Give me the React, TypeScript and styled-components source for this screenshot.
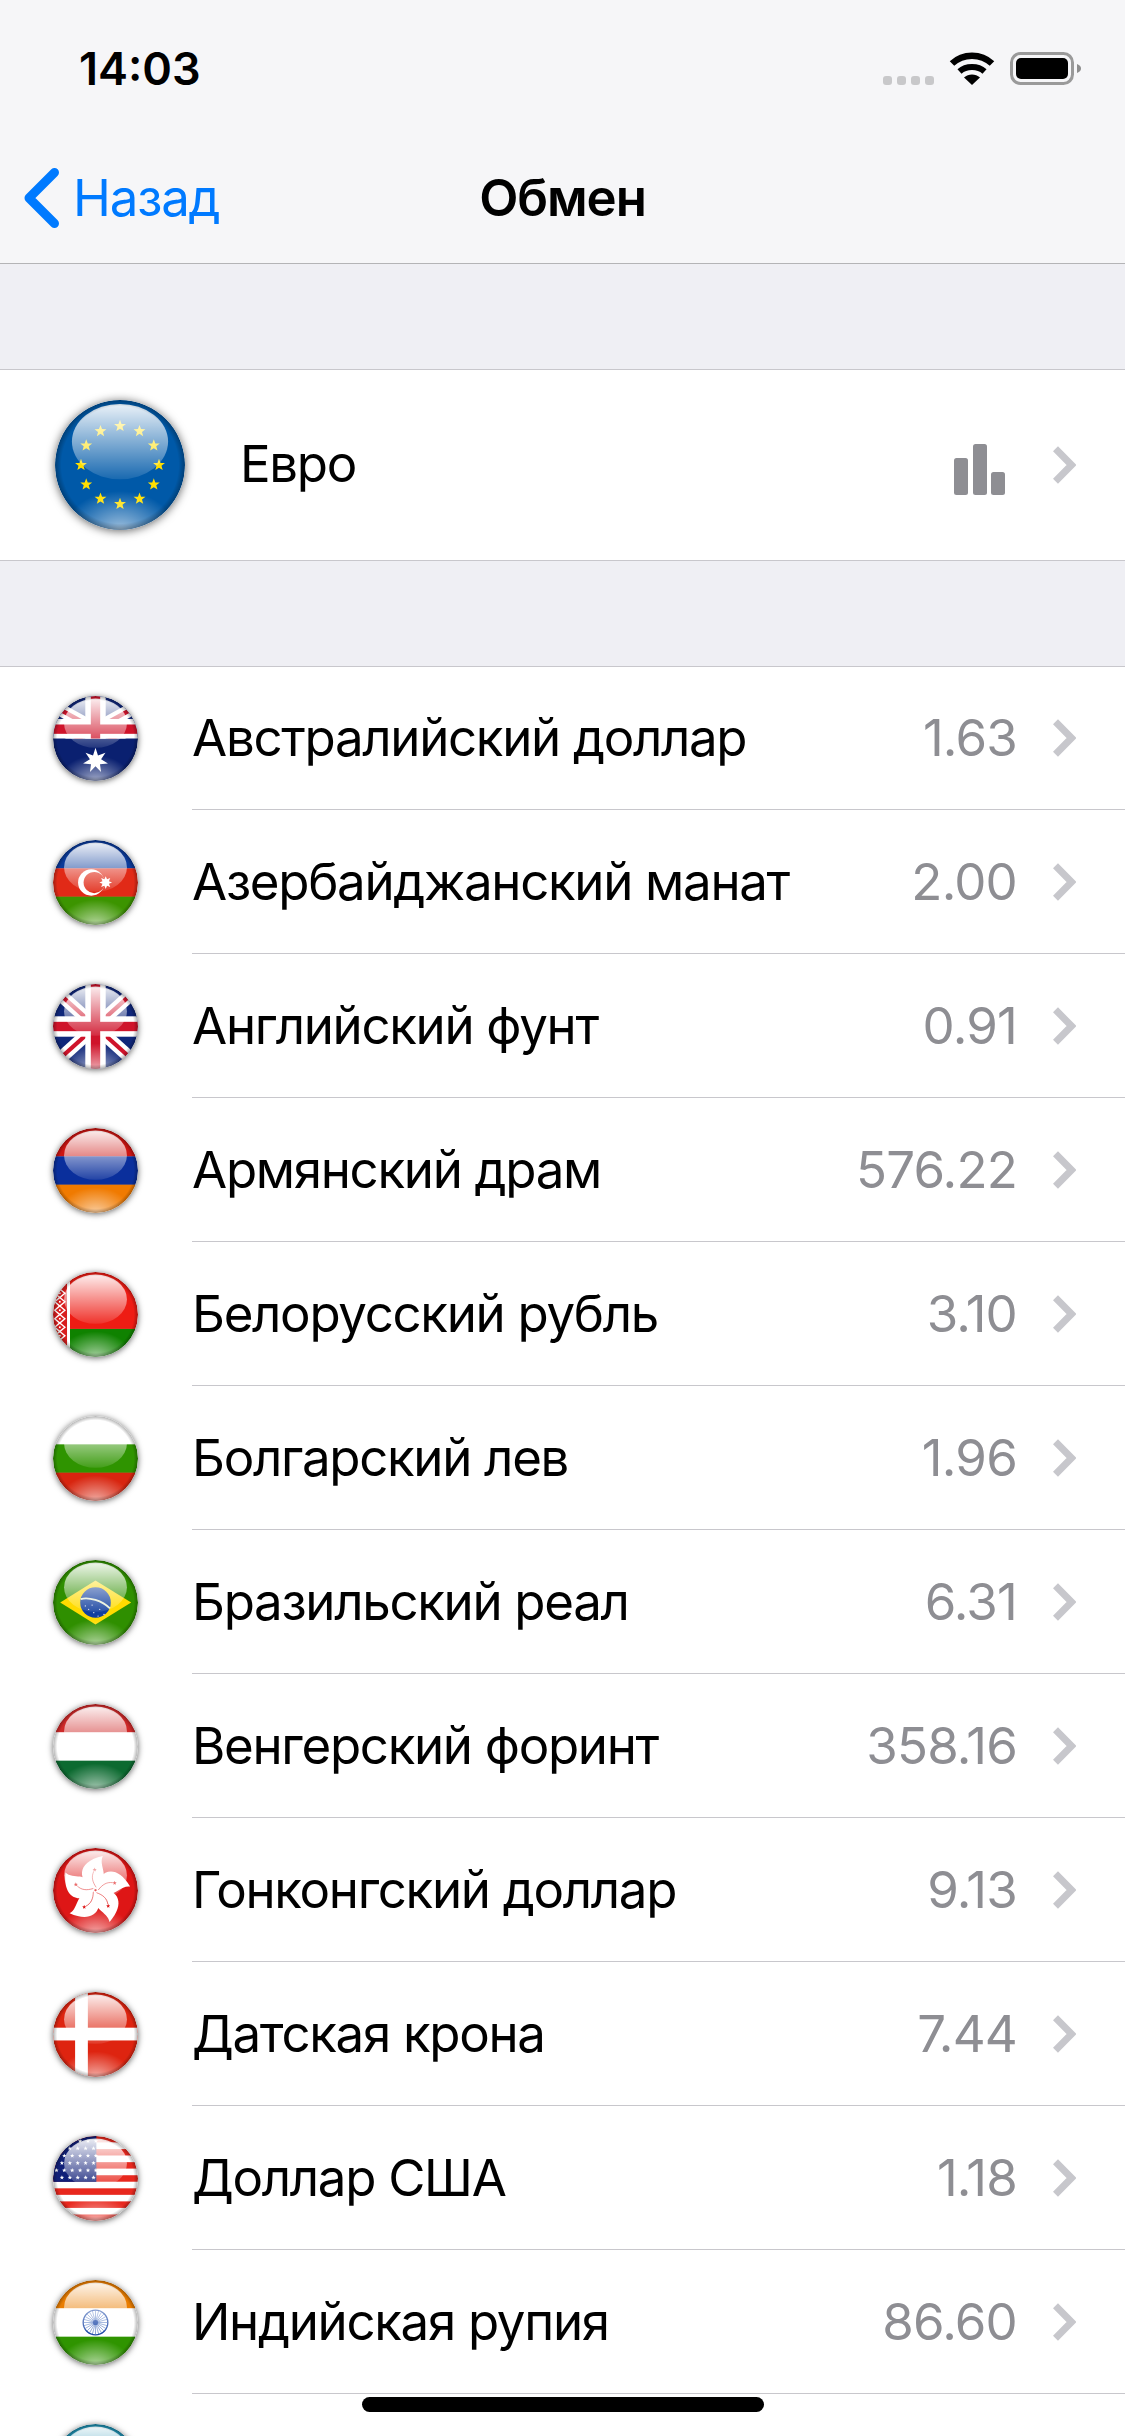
import React from "react";
import styled, { createGlobalStyle } from "styled-components";

const GlobalStyle = createGlobalStyle`
  html, body { margin: 0; padding: 0; background: #ffffff; }
  body { font-family: Inter, "Noto Sans", "Liberation Sans", sans-serif; -webkit-font-smoothing: antialiased; }
`;

const Screen = styled.div`
  position: relative;
  width: 1125px;
  height: 2436px;
  overflow: hidden;
  background: #ffffff;
`;
const Header = styled.header`
  background: #f6f6f8;
  border-bottom: 1px solid #b4b4b6;
`;
const StatusBar = styled.div`
  height: 132px;
  display: flex;
  align-items: flex-start;
  justify-content: space-between;
  padding: 52px 44px 0 79px;
  box-sizing: border-box;
`;
const Time = styled.div`
  font-size: 45px;
  font-weight: 600;
  line-height: 33px;
  color: #000;
`;
const StatusIcons = styled.div`
  display: flex;
  align-items: flex-end;
  height: 33px;
  gap: 15px;
`;
const SignalDots = styled.div`
  display: flex;
  gap: 5px;
`;
const SignalDot = styled.span`
  width: 9px;
  height: 9px;
  border-radius: 3px;
  background: #c8c8ca;
`;
const NavBar = styled.nav`
  height: 131px;
  display: grid;
  grid-template-columns: 1fr auto 1fr;
  align-items: center;
  box-sizing: border-box;
`;
const BackLink = styled.div`
  display: flex;
  align-items: center;
  gap: 12px;
  padding-left: 22px;
  font-size: 51px;
  letter-spacing: -1.2px;
  color: #007aff;
`;
const NavTitle = styled.h1`
  margin: 0;
  font-size: 51px;
  font-weight: 600;
  letter-spacing: -1.1px;
  color: #000;
`;
const Gap = styled.div`
  height: 105px;
  background: #efeff4;
`;
const Section = styled.section`
  border-top: 1px solid #c8c7cc;
`;
const EuroRow = styled.div`
  height: 190px;
  display: flex;
  align-items: center;
  padding: 0 49px 0 55px;
  border-bottom: 1px solid #c8c7cc;
`;
const EuroLabel = styled.span`
  flex: 1;
  margin-left: 55px;
  padding-bottom: 3px;
  font-size: 51px;
  letter-spacing: -1.3px;
  color: #000;
`;
const ChartIcon = styled.svg`
  margin-right: 48px;
  margin-top: 9px;
`;
const RowList = styled.div`
  margin-top: -1px;
`;
const Row = styled.div`
  height: 144px;
  display: flex;
  align-items: center;
  gap: 54px;
  padding-left: 53px;
  box-sizing: border-box;
`;
const RowBody = styled.div`
  flex: 1;
  height: 100%;
  box-sizing: border-box;
  display: flex;
  align-items: center;
  padding-right: 49px;
  border-bottom: 1px solid #c8c7cc;
`;
const Label = styled.span`
  flex: 1;
  padding-bottom: 1px;
  font-size: 51px;
  letter-spacing: -1.3px;
  color: #000;
`;
const Value = styled.span`
  margin-right: 36px;
  padding-bottom: 1px;
  font-size: 51px;
  letter-spacing: -0.8px;
  color: #8e8e93;
`;
const FlagSvg = styled.svg<{ $size: number }>`
  flex: none;
  display: block;
  width: ${(p) => p.$size}px;
  height: ${(p) => p.$size}px;
  border-radius: 50%;
  box-shadow: 0 1px ${(p) => Math.round(p.$size * 0.075)}px rgba(0, 0, 0, 0.62);
`;
const HomeIndicator = styled.div`
  position: absolute;
  left: 362px;
  bottom: 24px;
  width: 402px;
  height: 15px;
  border-radius: 8px;
  background: #000;
`;

const star = (cx: number, cy: number, r: number, n = 5, inner = 0.42) => {
  const pts: string[] = [];
  for (let i = 0; i < n * 2; i++) {
    const a = -Math.PI / 2 + (i * Math.PI) / n;
    const rr = i % 2 === 0 ? r : r * inner;
    pts.push(`${(cx + rr * Math.cos(a)).toFixed(2)},${(cy + rr * Math.sin(a)).toFixed(2)}`);
  }
  return pts.join(" ");
};

const Stripes = ({ colors }: { colors: string[] }) => (
  <>
    {colors.map((c, i) => (
      <rect key={i} x="0" y={(i * 100) / colors.length} width="100" height={100 / colors.length + 0.3} fill={c} />
    ))}
  </>
);

const Jack = ({ cy, slope }: { cy: number; slope: number }) => {
  const y1 = cy - slope * 70;
  const y2 = cy + slope * 70;
  return (
    <>
      <rect x="-5" y="-5" width="110" height="110" fill="#10277a" />
      <line x1="-20" y1={y1} x2="120" y2={y2} stroke="#fff" strokeWidth="15" />
      <line x1="-20" y1={y2} x2="120" y2={y1} stroke="#fff" strokeWidth="15" />
      <line x1="-20" y1={y1} x2="120" y2={y2} stroke="#cf142b" strokeWidth="5" />
      <line x1="-20" y1={y2} x2="120" y2={y1} stroke="#cf142b" strokeWidth="5" />
      <rect x="38" y="-5" width="24" height="110" fill="#fff" />
      <rect x="-5" y={cy - 12} width="110" height="24" fill="#fff" />
      <rect x="44.5" y="-5" width="11" height="110" fill="#cf142b" />
      <rect x="-5" y={cy - 5.5} width="110" height="11" fill="#cf142b" />
    </>
  );
};

const flagArt: Record<string, React.ReactNode> = {
  eu: (
    <>
      <rect width="100" height="100" fill="#0059a8" />
      {Array.from({ length: 12 }, (_, i) => {
        const a = (i * Math.PI) / 6;
        return <polygon key={i} points={star(50 + 30 * Math.sin(a), 50 - 30 * Math.cos(a), 4.8)} fill="#ffdf00" />;
      })}
    </>
  ),
  au: (
    <>
      <rect width="100" height="100" fill="#0a2070" />
      <svg x="0" y="0" width="100" height="50" viewBox="0 0 100 50">
        <Jack cy={39} slope={0.55} />
      </svg>
      <polygon points={star(50, 76, 15, 7, 0.45)} fill="#fff" />
    </>
  ),
  az: (
    <>
      <Stripes colors={["#0a3a9a", "#e12a17", "#3c9400"]} />
      <circle cx="45" cy="50" r="15.5" fill="#fff" />
      <circle cx="48.5" cy="50" r="12.5" fill="#e12a17" />
      <polygon points={star(62, 50, 7.5, 8, 0.55)} fill="#fff" />
    </>
  ),
  gb: (
    <>
      <Jack cy={50} slope={0.9} />
    </>
  ),
  am: <Stripes colors={["#cc1512", "#0a2f9c", "#f07a00"]} />,
  by: (
    <>
      <rect width="100" height="67" fill="#ee1c14" />
      <rect y="67" width="100" height="33" fill="#0f8200" />
      <rect width="20" height="100" fill="#fff" />
      <rect width="16.5" height="100" fill="#d81e1e" />
      {Array.from({ length: 9 }, (_, i) => (
        <g key={i}>
          <polygon
            points={`8,${10 + i * 10} 14,${15 + i * 10} 8,${20 + i * 10} 2,${15 + i * 10}`}
            fill="none"
            stroke="#fff"
            strokeWidth="1.6"
          />
          <rect x="7" y={14 + i * 10} width="2" height="2" fill="#fff" />
        </g>
      ))}
    </>
  ),
  bg: <Stripes colors={["#ffffff", "#2f9400", "#d8250f"]} />,
  br: (
    <>
      <rect width="100" height="100" fill="#2f8f00" />
      <polygon points="8.5,50 50,24 92,50 50,76" fill="#ffdb00" />
      <circle cx="50" cy="50" r="18" fill="#123f9e" />
      <path d="M32.5 46 C42 43 58 48 67 57" fill="none" stroke="#e8f0d8" strokeWidth="2.2" />
      {[[42, 58], [48, 62], [55, 58], [60, 64], [46, 53], [53, 66], [38, 54]].map(([x, y], i) => (
        <circle key={i} cx={x} cy={y} r="0.7" fill="#fff" />
      ))}
    </>
  ),
  hu: <Stripes colors={["#cf2a2a", "#ffffff", "#0c6a30"]} />,
  hk: (
    <>
      <rect width="100" height="100" fill="#de1616" />
      {[0, 72, 144, 216, 288].map((r) => (
        <g key={r} transform={`translate(50 49.5) rotate(${r})`}>
          <path d="M0 -1 C-21 -9 -24 -33 8.6 -40 C3 -28 18 -17 3 -2 Z" fill="#fff" />
          <polygon points={star(-1, -24, 2.6)} fill="#de1616" />
          <path d="M1 -3 C-4 -10 -5 -16 -2 -22" fill="none" stroke="#de1616" strokeWidth="0.7" />
        </g>
      ))}
    </>
  ),
  dk: (
    <>
      <rect width="100" height="100" fill="#de2410" />
      <rect x="26" width="15" height="100" fill="#fff" />
      <rect y="42" width="100" height="15" fill="#fff" />
    </>
  ),
  us: (
    <>
      {Array.from({ length: 13 }, (_, i) => (
        <rect key={i} y={(i * 100) / 13} width="100" height={100 / 13 + 0.2} fill={i % 2 === 0 ? "#e8281e" : "#fff"} />
      ))}
      <rect width="51" height="54" fill="#101f78" />
      {Array.from({ length: 6 }, (_, row) =>
        Array.from({ length: row % 2 === 0 ? 6 : 5 }, (_, col) => (
          <polygon
            key={`${row}-${col}`}
            points={star((row % 2 === 0 ? 4 : 10.5) + col * 13 * 0.65 * 1.1, 6 + row * 8.6, 2.7)}
            fill="#fff"
          />
        ))
      )}
    </>
  ),
  in: (
    <>
      <Stripes colors={["#ea7d00", "#ffffff", "#2f9400"]} />
      <circle cx="50" cy="50" r="14.5" fill="none" stroke="#1f4aa8" strokeWidth="1.6" />
      {Array.from({ length: 24 }, (_, i) => {
        const a = (i * Math.PI) / 12;
        return (
          <line
            key={i}
            x1="50"
            y1="50"
            x2={50 + 14 * Math.cos(a)}
            y2={50 + 14 * Math.sin(a)}
            stroke="#3a63b8"
            strokeWidth="0.7"
          />
        );
      })}
      <circle cx="50" cy="50" r="3" fill="#1f4aa8" />
    </>
  ),
  kz: (
    <>
      <rect width="100" height="100" fill="#1f8fb0" />
      <rect x="5" width="8" height="100" fill="#e3c21c" />
      <circle cx="55" cy="42" r="14" fill="#f3d21c" />
    </>
  ),
};

const Flag = ({ code, size }: { code: string; size: number }) => {
  const clip = `${code}-clip`;
  const gloss = `${code}-gloss`;
  const glow = `${code}-glow`;
  const rim = `${code}-rim`;
  return (
    <FlagSvg $size={size} viewBox="0 0 100 100" aria-hidden="true">
      <defs>
        <clipPath id={clip}>
          <circle cx="50" cy="50" r="50" />
        </clipPath>
        <linearGradient id={gloss} x1="0" y1="0" x2="0" y2="1">
          <stop offset="0" stopColor="#fff" stopOpacity="0.92" />
          <stop offset="1" stopColor="#fff" stopOpacity="0.1" />
        </linearGradient>
        <radialGradient id={glow} cx="50%" cy="100%" r="50%" gradientTransform="translate(0.5 1) scale(0.85 0.6) translate(-0.5 -1)">
          <stop offset="0" stopColor="#fff" stopOpacity="0.62" />
          <stop offset="1" stopColor="#fff" stopOpacity="0" />
        </radialGradient>
        <radialGradient id={rim} cx="50%" cy="50%" r="50%">
          <stop offset="0.9" stopColor="#000" stopOpacity="0" />
          <stop offset="1" stopColor="#000" stopOpacity="0.3" />
        </radialGradient>
      </defs>
      <g clipPath={`url(#${clip})`}>
        {flagArt[code]}
        <ellipse cx="50" cy="32" rx="37" ry="29" fill={`url(#${gloss})`} />
        <rect width="100" height="100" fill={`url(#${glow})`} />
        <rect width="100" height="100" fill={`url(#${rim})`} />
      </g>
    </FlagSvg>
  );
};

const Chevron = () => (
  <svg width="23" height="38" viewBox="0 0 23 38" aria-hidden="true">
    <path d="M2.5 2.8 L18.5 19 L2.5 35.2" fill="none" stroke="#c7c7cc" strokeWidth="7" />
  </svg>
);

const rates = [
  { code: "au", name: "Австралийский доллар", value: "1.63" },
  { code: "az", name: "Азербайджанский манат", value: "2.00" },
  { code: "gb", name: "Английский фунт", value: "0.91" },
  { code: "am", name: "Армянский драм", value: "576.22" },
  { code: "by", name: "Белорусский рубль", value: "3.10" },
  { code: "bg", name: "Болгарский лев", value: "1.96" },
  { code: "br", name: "Бразильский реал", value: "6.31" },
  { code: "hu", name: "Венгерский форинт", value: "358.16" },
  { code: "hk", name: "Гонконгский доллар", value: "9.13" },
  { code: "dk", name: "Датская крона", value: "7.44" },
  { code: "us", name: "Доллар США", value: "1.18" },
  { code: "in", name: "Индийская рупия", value: "86.60" },
];

export default function App() {
  return (
    <Screen>
      <GlobalStyle />
      <Header>
        <StatusBar>
          <Time>14:03</Time>
          <StatusIcons>
            <SignalDots>
              <SignalDot />
              <SignalDot />
              <SignalDot />
              <SignalDot />
            </SignalDots>
            <svg width="46" height="33" viewBox="0 0 46 33" aria-hidden="true">
              <path d="M3 11.5 C14 1 32 1 43 11.5" fill="none" stroke="#000" strokeWidth="6.5" />
              <path d="M10.5 19.5 C17 13.5 29 13.5 35.5 19.5" fill="none" stroke="#000" strokeWidth="6" />
              <path d="M23 33 L15 25.5 C19.5 21.5 26.5 21.5 31 25.5 Z" fill="#000" />
            </svg>
            <svg width="71" height="33" viewBox="0 0 71 33" aria-hidden="true">
              <rect x="1.5" y="1.5" width="61" height="30" rx="9" fill="none" stroke="#9a9a9a" strokeWidth="3" />
              <rect x="6" y="6" width="52" height="21" rx="5" fill="#000" />
              <path d="M67 12 C70 13 71 15 71 16.5 C71 18 70 20 67 21 Z" fill="#8e8e8e" />
            </svg>
          </StatusIcons>
        </StatusBar>
        <NavBar>
          <BackLink>
            <svg width="39" height="60" viewBox="0 0 39 60" aria-hidden="true">
              <path d="M32.5 4.5 L7 30 L32.5 55.5" fill="none" stroke="#007aff" strokeWidth="9" strokeLinecap="round" strokeLinejoin="round" />
            </svg>
            Назад
          </BackLink>
          <NavTitle>Обмен</NavTitle>
        </NavBar>
      </Header>
      <Gap />
      <Section>
        <EuroRow>
          <Flag code="eu" size={130} />
          <EuroLabel>Евро</EuroLabel>
          <ChartIcon width="51" height="51" viewBox="0 0 51 51" aria-hidden="true">
            <rect x="0" y="14" width="14" height="37" rx="2.5" fill="#8e8e93" />
            <rect x="19" y="0" width="14" height="51" rx="2.5" fill="#8e8e93" />
            <rect x="37" y="28" width="14" height="23" rx="2.5" fill="#8e8e93" />
          </ChartIcon>
          <Chevron />
        </EuroRow>
      </Section>
      <Gap />
      <Section>
        <RowList>
          {rates.map((r) => (
            <Row key={r.code}>
              <Flag code={r.code} size={85} />
              <RowBody>
                <Label>{r.name}</Label>
                <Value>{r.value}</Value>
                <Chevron />
              </RowBody>
            </Row>
          ))}
          <Row>
            <Flag code="kz" size={85} />
            <RowBody />
          </Row>
        </RowList>
      </Section>
      <HomeIndicator />
    </Screen>
  );
}
